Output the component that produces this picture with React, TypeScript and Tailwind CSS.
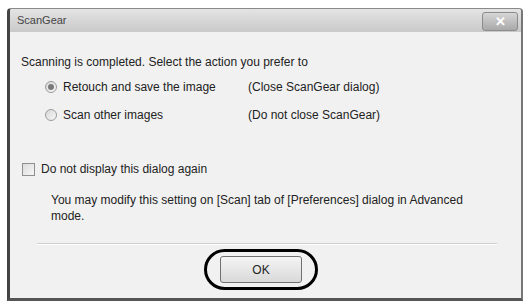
import React from "react";

function Radio({ checked }: { checked?: boolean }) {
  return (
    <span className="w-[12px] h-[12px] rounded-full border border-[#9a9a9a] bg-gradient-to-br from-[#d8d8d8] to-[#f8f8f8] flex items-center justify-center shrink-0">
      {checked && <span className="w-[6px] h-[6px] rounded-full bg-[#7a7a7a]" />}
    </span>
  );
}

export default function App() {
  return (
    <div className="w-[529px] h-[304px] bg-white pt-[8px] pl-[7px] font-['Liberation_Sans',Arial,sans-serif] text-[#222]">
      <div className="w-[516px] h-[293px] flex flex-col border border-[#8a8a8a] border-l-[3px] border-l-[#444] border-b-[3px] border-b-[#555] border-r-2 border-r-[#777] rounded-t-[4px] bg-[#f1f1f1]">
        {/* title bar */}
        <div className="h-[23px] flex items-center justify-between pl-[7px] pr-[3px] bg-gradient-to-b from-[#e4e4e4] to-[#c9c9c9] rounded-t-[3px]">
          <span className="text-[11px] text-[#444]">ScanGear</span>
          <span className="w-[36px] h-[19px] mt-[2px] rounded-[3px] border border-[#8c8c8c] bg-gradient-to-b from-[#d6d6d6] to-[#a9a9a9] flex items-center justify-center text-[13px] text-white font-bold leading-none">
            ✕
          </span>
        </div>

        {/* content */}
        <div className="flex-1 flex flex-col pl-[11px] pr-[20px] pt-[23px] text-[12px] leading-[14px]">
          <div>Scanning is completed. Select the action you prefer to</div>

          <div className="flex flex-col gap-[14px] pl-[24px] mt-[11px]">
            <div className="flex items-center">
              <Radio checked />
              <span className="ml-[6px] w-[185px]">Retouch and save the image</span>
              <span>(Close ScanGear dialog)</span>
            </div>
            <div className="flex items-center">
              <Radio />
              <span className="ml-[6px] w-[185px]">Scan other images</span>
              <span>(Do not close ScanGear)</span>
            </div>
          </div>

          <div className="flex items-center mt-[40px] pl-[1px]">
            <span className="w-[13px] h-[13px] border border-[#8f8f8f] bg-gradient-to-br from-[#dcdcdc] to-[#f6f6f6] shrink-0" />
            <span className="ml-[6px]">Do not display this dialog again</span>
          </div>

          <div className="pl-[30px] mt-[16px] leading-[16px]">
            You may modify this setting on [Scan] tab of [Preferences] dialog in Advanced
            <br />
            mode.
          </div>

          <div className="ml-[16px] mr-[4px] mt-[19px] h-[2px] border-t border-[#cfcfcf] border-b border-b-white" />

          <div className="flex justify-center mt-[4px]">
            <div className="rounded-full border-[3px] border-black px-[13px] py-[4px]">
              <div className="w-[82px] h-[27px] border border-[#707070] rounded-[3px] bg-gradient-to-b from-[#f4f4f4] to-[#d9d9d9] flex items-center justify-center text-[12px]">
                OK
              </div>
            </div>
          </div>
        </div>
      </div>
    </div>
  );
}
